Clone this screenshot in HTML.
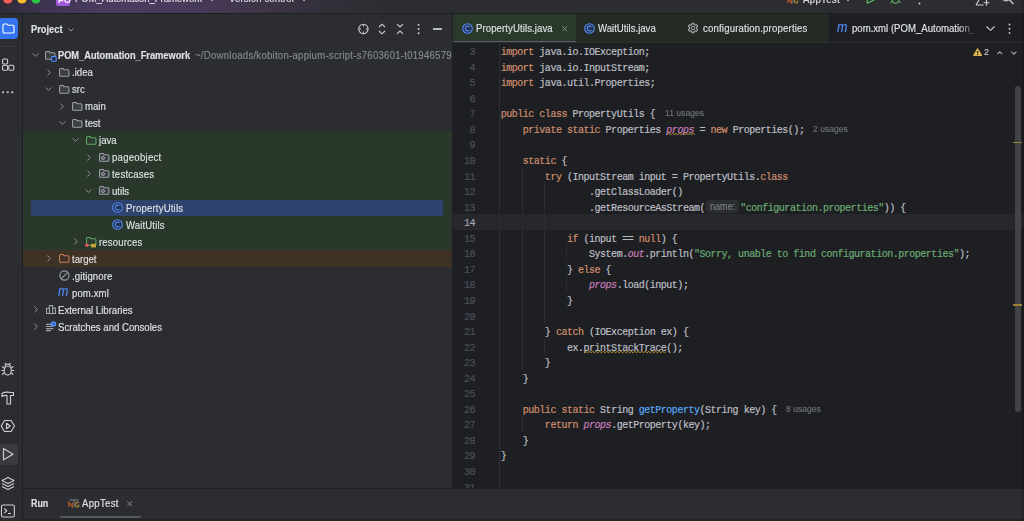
<!DOCTYPE html>
<html><head><meta charset="utf-8"><style>
*{margin:0;padding:0;box-sizing:border-box}
html,body{width:1024px;height:521px;overflow:hidden;background:#2B2D30;font-family:"Liberation Sans",sans-serif;color:#DFE1E5}
.a{position:absolute}
svg{position:absolute;overflow:visible}
.tx{position:absolute;white-space:nowrap;font-size:9.6px;line-height:12px;-webkit-text-stroke:0.15px currentColor}
.cl{position:absolute;left:47.7px;height:15.55px;padding-top:2px;font-family:"Liberation Mono",monospace;font-size:10px;letter-spacing:-0.48px;line-height:15.55px;white-space:pre;color:#BCBEC4;-webkit-text-stroke:0.2px currentColor}
.k{color:#CF8E6D}
.s{color:#6AAB73}
.f{color:#C77DBB;font-style:italic}
.m{color:#56A8F5}
.h{font-family:"Liberation Sans",sans-serif;color:#6F737A;font-size:9.3px;letter-spacing:0}
.ln{position:absolute;left:0;width:22px;height:15.55px;padding-top:2px;text-align:right;font-family:"Liberation Mono",monospace;font-size:10px;letter-spacing:-0.48px;line-height:15.55px;color:#4B5059;-webkit-text-stroke:0.2px currentColor}
</style></head><body>
<div class="a" style="left:0px;top:0px;width:1024px;height:13px;background:linear-gradient(90deg,#302B38 0%,#3D3350 4%,#4A3B5F 10%,#4A3B5E 17%,#3F3549 25%,#322F39 32%,#2B2D30 39%,#2B2D30 100%);"></div>
<div class="a" style="left:0px;top:13px;width:1024px;height:1px;background:#1E1F22;"></div>
<svg style="left:0px;top:-6px" width="60" height="12" viewBox="0 0 60 12"><circle cx="7.8" cy="5" r="4.6" fill="#FF5F57"/><circle cx="22" cy="5" r="4.6" fill="#FEBC2E"/><circle cx="36" cy="5" r="4.6" fill="#28C840"/></svg>
<div class="a" style="left:56px;top:-4px;width:14px;height:10px;background:#A259D9;border-radius:2px"></div>
<div class="tx" style="left:58px;top:-6.31px;color:#F0E8F8;font-size:9.90px;font-weight:bold;letter-spacing:0.000px;transform:scaleX(0.9091);transform-origin:0 0;">PO</div>
<div class="tx" style="left:75px;top:-7.73px;color:#DFE1E5;font-size:10.56px;font-weight:normal;letter-spacing:-0.088px;transform:scaleX(0.9091);transform-origin:0 0;">POM_Automation_Framework</div>
<svg style="left:209px;top:-2.5px" width="6" height="4" viewBox="0 0 6 4"><path d="M0.5 0.5 L3 3 L5.5 0.5" stroke="#9DA0A8" fill="none" stroke-width="1"/></svg>
<div class="tx" style="left:229px;top:-7.73px;color:#DFE1E5;font-size:10.56px;font-weight:normal;letter-spacing:0.110px;transform:scaleX(0.9091);transform-origin:0 0;">Version control</div>
<svg style="left:301px;top:-2.5px" width="6" height="4" viewBox="0 0 6 4"><path d="M0.5 0.5 L3 3 L5.5 0.5" stroke="#9DA0A8" fill="none" stroke-width="1"/></svg>
<svg style="left:787px;top:-5.5px" width="12" height="9" viewBox="0 0 12 9"><path d="M1.5 1 H10.5" stroke="#6F737A" stroke-width="1.3"/><path d="M6 1 V8.5" stroke="#6F737A" stroke-width="1.1"/><path d="M0.8 8 V3.2 L4.2 8 V3.2" stroke="#C0542A" fill="none" stroke-width="1.1"/><path d="M10.8 4 Q10.3 3.1 9.2 3.1 Q7.5 3.1 7.5 5.6 Q7.5 8.1 9.2 8.1 Q10.9 8.1 10.9 6.2 H9.3" stroke="#A88A3A" fill="none" stroke-width="1.1"/></svg>
<div class="tx" style="left:803px;top:-7.33px;color:#DFE1E5;font-size:10.56px;font-weight:normal;letter-spacing:0.363px;transform:scaleX(0.9091);transform-origin:0 0;">AppTest</div>
<svg style="left:845px;top:-2.5px" width="6" height="4" viewBox="0 0 6 4"><path d="M0.5 0.5 L3 3 L5.5 0.5" stroke="#9DA0A8" fill="none" stroke-width="1"/></svg>
<svg style="left:866px;top:-3px" width="10" height="8" viewBox="0 0 10 8"><path d="M1.2 -1 L9 2.5 L1.2 6.2 Z" stroke="#5FB865" fill="none" stroke-width="1.2" stroke-linejoin="round"/></svg>
<svg style="left:889px;top:-4px" width="13" height="9" viewBox="0 0 13 9"><path d="M3.2 1.5 Q3.2 -1 6.5 -1 Q9.8 -1 9.8 1.5 V4 Q9.8 7.2 6.5 7.2 Q3.2 7.2 3.2 4 Z" stroke="#5FB865" fill="none" stroke-width="1.1"/><path d="M0.8 3 H3.2 M9.8 3 H12.2 M1.2 6.8 L3.4 5.4 M11.8 6.8 L9.6 5.4 M3.2 1.8 H9.8" stroke="#5FB865" stroke-width="1" fill="none"/></svg>
<svg style="left:917.8px;top:1.5px" width="3" height="3" viewBox="0 0 3 3"><circle cx="1.5" cy="1.5" r="1" fill="#CED0D6"/></svg>
<svg style="left:974px;top:-3px" width="16" height="9" viewBox="0 0 16 9"><path d="M2 8 L5 3 M2 8 H9.5 M12.5 3 V8.8 M9.6 5.7 H15.4" stroke="#CED0D6" fill="none" stroke-width="1.15"/></svg>
<svg style="left:1000px;top:-5px" width="16" height="11" viewBox="0 0 16 11"><circle cx="6" cy="1.5" r="4.3" stroke="#CED0D6" fill="none" stroke-width="1.2"/><path d="M9.2 4.6 L13.5 9" stroke="#CED0D6" stroke-width="1.3"/></svg>
<div class="a" style="left:22px;top:14px;width:1px;height:507px;background:#1E1F22;"></div>
<div class="a" style="left:0px;top:17.5px;width:18px;height:21px;background:#3574F0;border-radius:0 4px 4px 0"></div>
<svg style="left:1.5px;top:23px" width="13" height="11" viewBox="0 0 13 11"><path d="M1 2 Q1 1 2 1 H5 L6.2 2.3 H11 Q12 2.3 12 3.3 V9 Q12 10 11 10 H2 Q1 10 1 9 Z" stroke="#FFFFFF" fill="none" stroke-width="1.1"/></svg>
<div class="a" style="left:0px;top:46px;width:16px;height:1px;background:#393B40;"></div>
<svg style="left:1px;top:57px" width="14" height="14" viewBox="0 0 14 14"><rect x="1.6" y="2" width="5" height="5" rx="1.2" stroke="#CED0D6" fill="none" stroke-width="1.1"/><rect x="1.6" y="8.2" width="5" height="5" rx="1.2" stroke="#CED0D6" fill="none" stroke-width="1.1"/><rect x="7.8" y="8.2" width="5" height="5" rx="1.2" stroke="#CED0D6" fill="none" stroke-width="1.1"/></svg>
<svg style="left:0px;top:90px" width="16" height="4" viewBox="0 0 16 4"><circle cx="3.1" cy="2.3" r="1.05" fill="#CED0D6"/><circle cx="7.7" cy="2.3" r="1.05" fill="#CED0D6"/><circle cx="12.3" cy="2.3" r="1.05" fill="#CED0D6"/></svg>
<svg style="left:0px;top:362px" width="16" height="15" viewBox="0 0 16 15"><path d="M5 4.5 Q5 2 7.7 2 Q10.4 2 10.4 4.5" stroke="#CED0D6" fill="none" stroke-width="1.1"/><ellipse cx="7.7" cy="8.5" rx="3.6" ry="4.5" stroke="#CED0D6" fill="none" stroke-width="1.1"/><path d="M1.5 8.5 H4 M11.4 8.5 H14 M2 4.5 L4.3 6 M13.4 4.5 L11.1 6 M2 12.5 L4.3 11 M13.4 12.5 L11.1 11 M5 1 L6 2.3 M10.4 1 L9.4 2.3" stroke="#CED0D6" stroke-width="1.1" fill="none"/></svg>
<svg style="left:0px;top:390px" width="16" height="16" viewBox="0 0 16 16"><path d="M2 3.5 Q5 1.5 11 2.5 H13.5 V5.5 H10.5 V14 H7 V5.5 Q5 5 2 6.5 Z" stroke="#CED0D6" fill="none" stroke-width="1.1" stroke-linejoin="round"/></svg>
<svg style="left:0px;top:418px" width="16" height="16" viewBox="0 0 16 16"><path d="M4.5 2.5 H11 L14.5 8 L11 13.5 H4.5 L1.2 8 Z" stroke="#CED0D6" fill="none" stroke-width="1.1" stroke-linejoin="round"/><path d="M6.5 5.3 L10.3 8 L6.5 10.7 Z" stroke="#CED0D6" fill="none" stroke-width="1.1" stroke-linejoin="round"/></svg>
<div class="a" style="left:0px;top:444px;width:18px;height:21px;background:#393B40;border-radius:0 4px 4px 0"></div>
<svg style="left:0px;top:446px" width="16" height="16" viewBox="0 0 16 16"><path d="M3.5 2.5 L13 8.2 L3.5 13.8 Z" stroke="#CED0D6" fill="none" stroke-width="1.1" stroke-linejoin="round"/></svg>
<svg style="left:0px;top:476px" width="16" height="15" viewBox="0 0 16 15"><path d="M8 1.5 L14 4.5 L8 7.5 L2 4.5 Z" stroke="#CED0D6" fill="none" stroke-width="1.1" stroke-linejoin="round"/><path d="M2 7.5 L8 10.5 L14 7.5 M2 10.5 L8 13.5 L14 10.5" stroke="#CED0D6" fill="none" stroke-width="1.1" stroke-linejoin="round"/></svg>
<svg style="left:0px;top:503px" width="16" height="16" viewBox="0 0 16 16"><rect x="1.5" y="2" width="12.8" height="12" rx="1.5" stroke="#CED0D6" fill="none" stroke-width="1.1"/><path d="M4.3 5.5 L6.8 7.8 L4.3 10 M8 10.5 H11" stroke="#CED0D6" fill="none" stroke-width="1.1"/></svg>
<div class="tx" style="left:31px;top:24.48px;color:#DFE1E5;font-size:10.23px;font-weight:bold;letter-spacing:0.000px;transform:scaleX(0.9091);transform-origin:0 0;">Project</div>
<svg style="left:67.5px;top:28px" width="7" height="4" viewBox="0 0 7 4"><path d="M0.5 0.5 L3 3 L5.5 0.5" stroke="#9DA0A8" fill="none" stroke-width="1"/></svg>
<svg style="left:357px;top:23px" width="13" height="13" viewBox="0 0 13 13"><circle cx="6.4" cy="6" r="4.7" stroke="#C4C6CB" fill="none" stroke-width="1.1"/><path d="M6.4 1.3 V3.6 M6.4 8.4 V10.7 M1.7 6 H4 M8.8 6 H11.1" stroke="#C4C6CB" stroke-width="1.1"/></svg>
<svg style="left:378px;top:23px" width="8" height="12" viewBox="0 0 8 12"><path d="M1 4 L4 1.2 L7 4 M1 8 L4 10.8 L7 8" stroke="#CED0D6" fill="none" stroke-width="1.1"/></svg>
<svg style="left:396px;top:23px" width="8" height="12" viewBox="0 0 8 12"><path d="M1 1.2 L4 4 L7 1.2 M1 10.8 L4 8 L7 10.8" stroke="#CED0D6" fill="none" stroke-width="1.1"/></svg>
<svg style="left:416px;top:23px" width="5" height="12" viewBox="0 0 5 12"><circle cx="2.6" cy="1.8" r="0.95" fill="#CED0D6"/><circle cx="2.6" cy="6" r="0.95" fill="#CED0D6"/><circle cx="2.6" cy="10.2" r="0.95" fill="#CED0D6"/></svg>
<div class="a" style="left:432.6px;top:28.4px;width:9.2px;height:1.2px;background:#B5B8BD;"></div>
<div class="a" style="left:23px;top:131.2px;width:429px;height:119px;background:#29382A;"></div>
<div class="a" style="left:23px;top:250.2px;width:429px;height:17px;background:#3E3224;"></div>
<div class="a" style="left:31px;top:199.7px;width:412px;height:16.5px;background:#2E436E;border-radius:3px"></div>
<svg style="left:32.0px;top:53.2px" width="7" height="4" viewBox="0 0 7 4"><path d="M0.5 0.5 L3.5 3.3 L6.5 0.5" stroke="#8C8F94" fill="none" stroke-width="1"/></svg>
<svg style="left:45.2px;top:50.7px" width="11" height="9" viewBox="0 0 11 9"><path d="M0.55 1.6 Q0.55 0.55 1.6 0.55 H4 L5.1 1.65 H8.9 Q9.95 1.65 9.95 2.7 V7.25 Q9.95 8.3 8.9 8.3 H1.6 Q0.55 8.3 0.55 7.25 Z" stroke="#9DA0A8" fill="#3C3E43" stroke-width="1.05"/></svg>
<svg style="left:51.2px;top:55.7px" width="6" height="6" viewBox="0 0 6 6"><rect x="0.6" y="0.6" width="4.6" height="4.6" rx="0.8" stroke="#548AF7" fill="#1E2A44" stroke-width="1.1"/></svg>
<div class="tx" style="left:58.0px;top:50.28px;color:#DFE1E5;font-size:10.18px;font-weight:bold;letter-spacing:0.000px;transform:scaleX(0.9091);transform-origin:0 0;">POM_Automation_Framework</div>
<div class="tx" style="left:194.5px;top:49.37px;color:#868A91;font-size:10.56px;font-weight:normal;letter-spacing:0.275px;transform:scaleX(0.9091);transform-origin:0 0;">~/Downloads/kobiton-appium-script-s7603601-t01946579</div>
<svg style="left:46.85px;top:68.67px" width="4" height="7" viewBox="0 0 4 7"><path d="M0.5 0.5 L3.3 3.5 L0.5 6.5" stroke="#8C8F94" fill="none" stroke-width="1"/></svg>
<svg style="left:58.7px;top:67.67px" width="11" height="9" viewBox="0 0 11 9"><path d="M0.55 1.6 Q0.55 0.55 1.6 0.55 H4 L5.1 1.65 H8.9 Q9.95 1.65 9.95 2.7 V7.25 Q9.95 8.3 8.9 8.3 H1.6 Q0.55 8.3 0.55 7.25 Z" stroke="#9DA0A8" fill="#3C3E43" stroke-width="1.05"/></svg>
<div class="tx" style="left:71.5px;top:66.34px;color:#DFE1E5;font-size:10.56px;font-weight:normal;letter-spacing:0.000px;transform:scaleX(0.9091);transform-origin:0 0;">.idea</div>
<svg style="left:45.35px;top:87.14px" width="7" height="4" viewBox="0 0 7 4"><path d="M0.5 0.5 L3.5 3.3 L6.5 0.5" stroke="#8C8F94" fill="none" stroke-width="1"/></svg>
<svg style="left:58.7px;top:84.64px" width="11" height="9" viewBox="0 0 11 9"><path d="M0.55 1.6 Q0.55 0.55 1.6 0.55 H4 L5.1 1.65 H8.9 Q9.95 1.65 9.95 2.7 V7.25 Q9.95 8.3 8.9 8.3 H1.6 Q0.55 8.3 0.55 7.25 Z" stroke="#9DA0A8" fill="#3C3E43" stroke-width="1.05"/></svg>
<div class="tx" style="left:71.5px;top:83.31px;color:#DFE1E5;font-size:10.56px;font-weight:normal;letter-spacing:0.000px;transform:scaleX(0.9091);transform-origin:0 0;">src</div>
<svg style="left:60.2px;top:102.61px" width="4" height="7" viewBox="0 0 4 7"><path d="M0.5 0.5 L3.3 3.5 L0.5 6.5" stroke="#8C8F94" fill="none" stroke-width="1"/></svg>
<svg style="left:72.2px;top:101.61px" width="11" height="9" viewBox="0 0 11 9"><path d="M0.55 1.6 Q0.55 0.55 1.6 0.55 H4 L5.1 1.65 H8.9 Q9.95 1.65 9.95 2.7 V7.25 Q9.95 8.3 8.9 8.3 H1.6 Q0.55 8.3 0.55 7.25 Z" stroke="#9DA0A8" fill="#3C3E43" stroke-width="1.05"/></svg>
<div class="tx" style="left:85.0px;top:100.28px;color:#DFE1E5;font-size:10.56px;font-weight:normal;letter-spacing:0.000px;transform:scaleX(0.9091);transform-origin:0 0;">main</div>
<svg style="left:58.7px;top:121.08px" width="7" height="4" viewBox="0 0 7 4"><path d="M0.5 0.5 L3.5 3.3 L6.5 0.5" stroke="#8C8F94" fill="none" stroke-width="1"/></svg>
<svg style="left:72.2px;top:118.58px" width="11" height="9" viewBox="0 0 11 9"><path d="M0.55 1.6 Q0.55 0.55 1.6 0.55 H4 L5.1 1.65 H8.9 Q9.95 1.65 9.95 2.7 V7.25 Q9.95 8.3 8.9 8.3 H1.6 Q0.55 8.3 0.55 7.25 Z" stroke="#9DA0A8" fill="#3C3E43" stroke-width="1.05"/></svg>
<div class="tx" style="left:85.0px;top:117.25px;color:#DFE1E5;font-size:10.56px;font-weight:normal;letter-spacing:0.000px;transform:scaleX(0.9091);transform-origin:0 0;">test</div>
<svg style="left:72.05px;top:138.05px" width="7" height="4" viewBox="0 0 7 4"><path d="M0.5 0.5 L3.5 3.3 L6.5 0.5" stroke="#8C8F94" fill="none" stroke-width="1"/></svg>
<svg style="left:85.7px;top:135.55px" width="11" height="9" viewBox="0 0 11 9"><path d="M0.55 1.6 Q0.55 0.55 1.6 0.55 H4 L5.1 1.65 H8.9 Q9.95 1.65 9.95 2.7 V7.25 Q9.95 8.3 8.9 8.3 H1.6 Q0.55 8.3 0.55 7.25 Z" stroke="#5FA86A" fill="#2E3B30" stroke-width="1.05"/></svg>
<div class="tx" style="left:98.5px;top:134.22px;color:#DFE1E5;font-size:10.56px;font-weight:normal;letter-spacing:0.000px;transform:scaleX(0.9091);transform-origin:0 0;">java</div>
<svg style="left:86.9px;top:153.51999999999998px" width="4" height="7" viewBox="0 0 4 7"><path d="M0.5 0.5 L3.3 3.5 L0.5 6.5" stroke="#8C8F94" fill="none" stroke-width="1"/></svg>
<svg style="left:99.2px;top:152.51999999999998px" width="11" height="9" viewBox="0 0 11 9"><path d="M0.55 1.6 Q0.55 0.55 1.6 0.55 H4 L5.1 1.65 H8.9 Q9.95 1.65 9.95 2.7 V7.25 Q9.95 8.3 8.9 8.3 H1.6 Q0.55 8.3 0.55 7.25 Z" stroke="#9DA0A8" fill="#3C3E43" stroke-width="1.05"/></svg>
<svg style="left:100.5px;top:155.51999999999998px" width="4" height="4" viewBox="0 0 4 4"><circle cx="2" cy="2" r="1.45" stroke="#A8ABB2" fill="none" stroke-width="1"/></svg>
<div class="tx" style="left:112.0px;top:151.19px;color:#DFE1E5;font-size:10.56px;font-weight:normal;letter-spacing:0.275px;transform:scaleX(0.9091);transform-origin:0 0;">pageobject</div>
<svg style="left:86.9px;top:170.49px" width="4" height="7" viewBox="0 0 4 7"><path d="M0.5 0.5 L3.3 3.5 L0.5 6.5" stroke="#8C8F94" fill="none" stroke-width="1"/></svg>
<svg style="left:99.2px;top:169.49px" width="11" height="9" viewBox="0 0 11 9"><path d="M0.55 1.6 Q0.55 0.55 1.6 0.55 H4 L5.1 1.65 H8.9 Q9.95 1.65 9.95 2.7 V7.25 Q9.95 8.3 8.9 8.3 H1.6 Q0.55 8.3 0.55 7.25 Z" stroke="#9DA0A8" fill="#3C3E43" stroke-width="1.05"/></svg>
<svg style="left:100.5px;top:172.49px" width="4" height="4" viewBox="0 0 4 4"><circle cx="2" cy="2" r="1.45" stroke="#A8ABB2" fill="none" stroke-width="1"/></svg>
<div class="tx" style="left:112.0px;top:168.16px;color:#DFE1E5;font-size:10.56px;font-weight:normal;letter-spacing:0.220px;transform:scaleX(0.9091);transform-origin:0 0;">testcases</div>
<svg style="left:85.4px;top:188.95999999999998px" width="7" height="4" viewBox="0 0 7 4"><path d="M0.5 0.5 L3.5 3.3 L6.5 0.5" stroke="#8C8F94" fill="none" stroke-width="1"/></svg>
<svg style="left:99.2px;top:186.45999999999998px" width="11" height="9" viewBox="0 0 11 9"><path d="M0.55 1.6 Q0.55 0.55 1.6 0.55 H4 L5.1 1.65 H8.9 Q9.95 1.65 9.95 2.7 V7.25 Q9.95 8.3 8.9 8.3 H1.6 Q0.55 8.3 0.55 7.25 Z" stroke="#9DA0A8" fill="#3C3E43" stroke-width="1.05"/></svg>
<svg style="left:100.5px;top:189.45999999999998px" width="4" height="4" viewBox="0 0 4 4"><circle cx="2" cy="2" r="1.45" stroke="#A8ABB2" fill="none" stroke-width="1"/></svg>
<div class="tx" style="left:112.0px;top:185.13px;color:#DFE1E5;font-size:10.56px;font-weight:normal;letter-spacing:0.000px;transform:scaleX(0.9091);transform-origin:0 0;">utils</div>
<svg style="left:112.4px;top:202.43px" width="11" height="11" viewBox="0 0 11 11"><circle cx="5.5" cy="5.5" r="4.8" stroke="#548AF7" fill="#25324D" stroke-width="1.1"/><path d="M7.4 4.1 Q6.9 3.1 5.6 3.1 Q3.4 3.1 3.4 5.5 Q3.4 7.9 5.6 7.9 Q6.9 7.9 7.4 6.9" stroke="#548AF7" fill="none" stroke-width="1.1"/></svg>
<div class="tx" style="left:125.5px;top:202.10px;color:#DFE1E5;font-size:10.56px;font-weight:normal;letter-spacing:0.198px;transform:scaleX(0.9091);transform-origin:0 0;">PropertyUtils</div>
<svg style="left:112.4px;top:219.39999999999998px" width="11" height="11" viewBox="0 0 11 11"><circle cx="5.5" cy="5.5" r="4.8" stroke="#548AF7" fill="#25324D" stroke-width="1.1"/><path d="M7.4 4.1 Q6.9 3.1 5.6 3.1 Q3.4 3.1 3.4 5.5 Q3.4 7.9 5.6 7.9 Q6.9 7.9 7.4 6.9" stroke="#548AF7" fill="none" stroke-width="1.1"/></svg>
<div class="tx" style="left:125.5px;top:219.07px;color:#DFE1E5;font-size:10.56px;font-weight:normal;letter-spacing:0.132px;transform:scaleX(0.9091);transform-origin:0 0;">WaitUtils</div>
<svg style="left:73.55px;top:238.37px" width="4" height="7" viewBox="0 0 4 7"><path d="M0.5 0.5 L3.3 3.5 L0.5 6.5" stroke="#8C8F94" fill="none" stroke-width="1"/></svg>
<svg style="left:85.7px;top:237.37px" width="11" height="9" viewBox="0 0 11 9"><path d="M0.55 1.6 Q0.55 0.55 1.6 0.55 H4 L5.1 1.65 H8.9 Q9.95 1.65 9.95 2.7 V7.25 Q9.95 8.3 8.9 8.3 H1.6 Q0.55 8.3 0.55 7.25 Z" stroke="#5FA86A" fill="#2E3B30" stroke-width="1.05"/></svg>
<svg style="left:84.7px;top:242.87px" width="12" height="5" viewBox="0 0 12 5"><circle cx="2" cy="2.2" r="1.7" fill="#E55B5B"/><rect x="6" y="0.8" width="5" height="3.6" fill="#C9A43A"/></svg>
<div class="tx" style="left:98.5px;top:236.04px;color:#DFE1E5;font-size:10.56px;font-weight:normal;letter-spacing:0.165px;transform:scaleX(0.9091);transform-origin:0 0;">resources</div>
<svg style="left:46.85px;top:255.33999999999997px" width="4" height="7" viewBox="0 0 4 7"><path d="M0.5 0.5 L3.3 3.5 L0.5 6.5" stroke="#8C8F94" fill="none" stroke-width="1"/></svg>
<svg style="left:58.7px;top:254.33999999999997px" width="11" height="9" viewBox="0 0 11 9"><path d="M0.55 1.6 Q0.55 0.55 1.6 0.55 H4 L5.1 1.65 H8.9 Q9.95 1.65 9.95 2.7 V7.25 Q9.95 8.3 8.9 8.3 H1.6 Q0.55 8.3 0.55 7.25 Z" stroke="#C77D55" fill="#3E3026" stroke-width="1.05"/></svg>
<div class="tx" style="left:71.5px;top:253.01px;color:#DFE1E5;font-size:10.56px;font-weight:normal;letter-spacing:0.000px;transform:scaleX(0.9091);transform-origin:0 0;">target</div>
<svg style="left:58.7px;top:270.31px" width="11" height="11" viewBox="0 0 11 11"><circle cx="5.5" cy="5.5" r="4.6" stroke="#9DA0A8" fill="none" stroke-width="1.1"/><path d="M2.3 8.7 L8.7 2.3" stroke="#9DA0A8" stroke-width="1.1"/></svg>
<div class="tx" style="left:71.5px;top:269.98px;color:#DFE1E5;font-size:10.56px;font-weight:normal;letter-spacing:0.110px;transform:scaleX(0.9091);transform-origin:0 0;">.gitignore</div>
<div class="tx" style="left:58.2px;top:285.85px;color:#548AF7;font-size:13.75px;font-weight:normal;letter-spacing:0.000px;transform:scaleX(0.9091);transform-origin:0 0;font-style:italic;">m</div>
<div class="tx" style="left:71.5px;top:286.95px;color:#DFE1E5;font-size:10.56px;font-weight:normal;letter-spacing:0.110px;transform:scaleX(0.9091);transform-origin:0 0;">pom.xml</div>
<svg style="left:33.5px;top:306.25px" width="4" height="7" viewBox="0 0 4 7"><path d="M0.5 0.5 L3.3 3.5 L0.5 6.5" stroke="#8C8F94" fill="none" stroke-width="1"/></svg>
<svg style="left:46.0px;top:305.4px" width="10" height="9" viewBox="0 0 10 9"><path d="M0.55 8.5 V3.2 H3.4 V8.5 M3.4 8.5 V0.55 H6.6 V8.5 M6.6 8.5 V3.2 L9.3 2.8 L9.45 8.5 M0.2 8.45 H9.8" stroke="#A8ABB0" fill="none" stroke-width="1.05" stroke-linejoin="round"/></svg>
<div class="tx" style="left:58.0px;top:303.92px;color:#DFE1E5;font-size:10.56px;font-weight:normal;letter-spacing:0.000px;transform:scaleX(0.9091);transform-origin:0 0;">External Libraries</div>
<svg style="left:33.5px;top:323.21999999999997px" width="4" height="7" viewBox="0 0 4 7"><path d="M0.5 0.5 L3.3 3.5 L0.5 6.5" stroke="#8C8F94" fill="none" stroke-width="1"/></svg>
<svg style="left:45.2px;top:321.21999999999997px" width="12" height="11" viewBox="0 0 12 11"><path d="M1 3.3 H6 M1 5.5 H7.5 M1 7.6 H8.5 M1 9.7 H6" stroke="#9DA0A8" stroke-width="1.2"/><circle cx="8.4" cy="3" r="2.8" fill="#548AF7"/><path d="M8.4 1.6 V3.1 L9.4 4" stroke="#1E2A44" stroke-width="0.7" fill="none"/></svg>
<div class="tx" style="left:58.0px;top:320.89px;color:#DFE1E5;font-size:10.56px;font-weight:normal;letter-spacing:0.000px;transform:scaleX(0.9091);transform-origin:0 0;">Scratches and Consoles</div>
<div class="a" style="left:452px;top:14px;width:1px;height:474px;background:#1E1F22;"></div>
<div class="a" style="left:453px;top:14px;width:571px;height:474px;background:#1E1F22;"></div>
<div class="a" style="left:453px;top:14px;width:123px;height:29px;background:#2A3A2A;"></div>
<div class="a" style="left:576px;top:14px;width:253px;height:29px;background:#232B24;"></div>
<div class="a" style="left:453px;top:40.5px;width:123px;height:2px;background:#5A5D63;"></div>
<div class="a" style="left:453px;top:42px;width:571px;height:1px;background:#2B2D30;"></div>
<svg style="left:461.5px;top:23.0px" width="11" height="11" viewBox="0 0 11 11"><circle cx="5.5" cy="5.5" r="4.8" stroke="#548AF7" fill="#25324D" stroke-width="1.1"/><path d="M7.4 4.1 Q6.9 3.1 5.6 3.1 Q3.4 3.1 3.4 5.5 Q3.4 7.9 5.6 7.9 Q6.9 7.9 7.4 6.9" stroke="#548AF7" fill="none" stroke-width="1.1"/></svg>
<div class="tx" style="left:476px;top:22.17px;color:#DFE1E5;font-size:10.56px;font-weight:normal;letter-spacing:0.099px;transform:scaleX(0.9091);transform-origin:0 0;">PropertyUtils.java</div>
<svg style="left:561.9px;top:25.7px" width="6" height="6" viewBox="0 0 6 6"><path d="M0.3 0.3 L5.1 5.1 M5.1 0.3 L0.3 5.1" stroke="#8A8D92" stroke-width="1"/></svg>
<svg style="left:583.5px;top:23.0px" width="11" height="11" viewBox="0 0 11 11"><circle cx="5.5" cy="5.5" r="4.8" stroke="#548AF7" fill="#25324D" stroke-width="1.1"/><path d="M7.4 4.1 Q6.9 3.1 5.6 3.1 Q3.4 3.1 3.4 5.5 Q3.4 7.9 5.6 7.9 Q6.9 7.9 7.4 6.9" stroke="#548AF7" fill="none" stroke-width="1.1"/></svg>
<div class="tx" style="left:598px;top:22.17px;color:#DFE1E5;font-size:10.56px;font-weight:normal;letter-spacing:0.000px;transform:scaleX(0.9091);transform-origin:0 0;">WaitUtils.java</div>
<svg style="left:687px;top:22.1px" width="12" height="12" viewBox="0 0 12 12"><path d="M4.98 1.21 L7.02 1.21 L7.08 2.46 L8.52 3.29 L9.64 2.72 L10.66 4.49 L9.61 5.17 L9.61 6.83 L10.66 7.51 L9.64 9.28 L8.52 8.71 L7.08 9.54 L7.02 10.79 L4.98 10.79 L4.92 9.54 L3.48 8.71 L2.36 9.28 L1.34 7.51 L2.39 6.83 L2.39 5.17 L1.34 4.49 L2.36 2.72 L3.48 3.29 L4.92 2.46 Z" stroke="#A8ABB0" fill="none" stroke-width="1.05" stroke-linejoin="round"/><circle cx="6" cy="6" r="1.75" stroke="#A8ABB0" fill="none" stroke-width="1"/></svg>
<div class="tx" style="left:702.5px;top:22.17px;color:#DFE1E5;font-size:10.56px;font-weight:normal;letter-spacing:0.198px;transform:scaleX(0.9091);transform-origin:0 0;">configuration.properties</div>
<div class="tx" style="left:837px;top:21.57px;color:#548AF7;font-size:13.75px;font-weight:normal;letter-spacing:0.000px;transform:scaleX(0.9091);transform-origin:0 0;font-style:italic;">m</div>
<div class="a" style="left:852px;top:14px;width:124px;height:28px;overflow:hidden;-webkit-mask-image:linear-gradient(90deg,#000 86%,transparent 100%)"><div class="tx" style="left:0px;top:8.17px;color:#DFE1E5;font-size:10.56px;font-weight:normal;letter-spacing:0.000px;transform:scaleX(0.9091);transform-origin:0 0;">pom.xml (POM_Automation_Framework)</div></div>
<svg style="left:986px;top:25.5px" width="9" height="5" viewBox="0 0 9 5"><path d="M0.5 0.5 L4.5 4.3 L8.5 0.5" stroke="#CED0D6" fill="none" stroke-width="1.1"/></svg>
<svg style="left:1007px;top:23px" width="5" height="12" viewBox="0 0 5 12"><circle cx="2.5" cy="1.5" r="0.95" fill="#CED0D6"/><circle cx="2.5" cy="5.7" r="0.95" fill="#CED0D6"/><circle cx="2.5" cy="9.9" r="0.95" fill="#CED0D6"/></svg>
<svg style="left:972.8px;top:47.8px" width="9.2" height="8.4" viewBox="0 0 9.2 8.4"><path d="M4.6 1.2 L8.3 7.3 H0.9 Z" fill="#D8B04A" stroke="#D8B04A" stroke-width="1.6" stroke-linejoin="round"/><path d="M4.6 2.9 V5.2" stroke="#1E1F22" stroke-width="1.1"/><circle cx="4.6" cy="6.6" r="0.6" fill="#1E1F22"/></svg>
<div class="tx" style="left:983.7px;top:45.80px;color:#C9CCD1;font-size:9.68px;font-weight:normal;letter-spacing:0.000px;transform:scaleX(0.9091);transform-origin:0 0;">2</div>
<svg style="left:996.6px;top:50.8px" width="6" height="4" viewBox="0 0 6 4"><path d="M0.4 3.2 L2.8 0.8 L5.2 3.2" stroke="#A8ABB0" fill="none" stroke-width="1.1"/></svg>
<svg style="left:1011.4px;top:50.6px" width="7" height="4" viewBox="0 0 7 4"><path d="M0.4 0.6 L2.9 3.1 L5.4 0.6" stroke="#A8ABB0" fill="none" stroke-width="1.1"/></svg>
<div class="a" style="left:453px;top:14px;width:571px;height:474px;overflow:hidden"><div class="a" style="left:0;top:200.20px;width:571px;height:15.55px;background:#26282E"></div><div class="a" style="left:46px;top:29.15px;width:1px;height:450.95px;background:#2B2D30"></div><div class="a" style="left:69px;top:153.55px;width:1px;height:202.15px;background:#2B2D30"></div><div class="a" style="left:91px;top:169.10px;width:1px;height:139.95px;background:#2B2D30"></div><div class="a" style="left:91px;top:324.60px;width:1px;height:15.55px;background:#2B2D30"></div><div class="a" style="left:113px;top:231.30px;width:1px;height:15.55px;background:#2B2D30"></div><div class="a" style="left:113px;top:262.40px;width:1px;height:15.55px;background:#2B2D30"></div><div class="a" style="left:69px;top:402.35px;width:1px;height:15.55px;background:#2B2D30"></div><div class="ln" style="top:29.15px;left:0;width:22px;color:#4B5059">3</div><div class="cl" style="top:29.15px"><span class="k">import</span> java.io.IOException;</div><div class="ln" style="top:44.70px;left:0;width:22px;color:#4B5059">4</div><div class="cl" style="top:44.70px"><span class="k">import</span> java.io.InputStream;</div><div class="ln" style="top:60.25px;left:0;width:22px;color:#4B5059">5</div><div class="cl" style="top:60.25px"><span class="k">import</span> java.util.Properties;</div><div class="ln" style="top:75.80px;left:0;width:22px;color:#4B5059">6</div><div class="ln" style="top:91.35px;left:0;width:22px;color:#4B5059">7</div><div class="cl" style="top:91.35px"><span class="k">public class</span> PropertyUtils {</div><div class="ln" style="top:106.90px;left:0;width:22px;color:#4B5059">8</div><div class="cl" style="top:106.90px">    <span class="k">private static</span> Properties <span class="f">props</span> = <span class="k">new</span> Properties();</div><div class="ln" style="top:122.45px;left:0;width:22px;color:#4B5059">9</div><div class="ln" style="top:138.00px;left:0;width:22px;color:#4B5059">10</div><div class="cl" style="top:138.00px">    <span class="k">static</span> {</div><div class="ln" style="top:153.55px;left:0;width:22px;color:#4B5059">11</div><div class="cl" style="top:153.55px">        <span class="k">try</span> (InputStream input = PropertyUtils.<span class="k">class</span></div><div class="ln" style="top:169.10px;left:0;width:22px;color:#4B5059">12</div><div class="cl" style="top:169.10px">                .getClassLoader()</div><div class="ln" style="top:184.65px;left:0;width:22px;color:#4B5059">13</div><div class="cl" style="top:184.65px">                .getResourceAsStream(</div><div class="ln" style="top:200.20px;left:0;width:22px;color:#A1A3AB">14</div><div class="ln" style="top:215.75px;left:0;width:22px;color:#4B5059">15</div><div class="cl" style="top:215.75px">            <span class="k">if</span> (input == <span class="k">null</span>) {</div><div class="ln" style="top:231.30px;left:0;width:22px;color:#4B5059">16</div><div class="cl" style="top:231.30px">                System.<span class="f">out</span>.println(<span class="s">&quot;Sorry, unable to find configuration.properties&quot;</span>);</div><div class="ln" style="top:246.85px;left:0;width:22px;color:#4B5059">17</div><div class="cl" style="top:246.85px">            } <span class="k">else</span> {</div><div class="ln" style="top:262.40px;left:0;width:22px;color:#4B5059">18</div><div class="cl" style="top:262.40px">                <span class="f">props</span>.load(input);</div><div class="ln" style="top:277.95px;left:0;width:22px;color:#4B5059">19</div><div class="cl" style="top:277.95px">            }</div><div class="ln" style="top:293.50px;left:0;width:22px;color:#4B5059">20</div><div class="ln" style="top:309.05px;left:0;width:22px;color:#4B5059">21</div><div class="cl" style="top:309.05px">        } <span class="k">catch</span> (IOException ex) {</div><div class="ln" style="top:324.60px;left:0;width:22px;color:#4B5059">22</div><div class="cl" style="top:324.60px">            ex.printStackTrace();</div><div class="ln" style="top:340.15px;left:0;width:22px;color:#4B5059">23</div><div class="cl" style="top:340.15px">        }</div><div class="ln" style="top:355.70px;left:0;width:22px;color:#4B5059">24</div><div class="cl" style="top:355.70px">    }</div><div class="ln" style="top:371.25px;left:0;width:22px;color:#4B5059">25</div><div class="ln" style="top:386.80px;left:0;width:22px;color:#4B5059">26</div><div class="cl" style="top:386.80px">    <span class="k">public static</span> String <span class="m">getProperty</span>(String key) {</div><div class="ln" style="top:402.35px;left:0;width:22px;color:#4B5059">27</div><div class="cl" style="top:402.35px">        <span class="k">return</span> <span class="f">props</span>.getProperty(key);</div><div class="ln" style="top:417.90px;left:0;width:22px;color:#4B5059">28</div><div class="cl" style="top:417.90px">    }</div><div class="ln" style="top:433.45px;left:0;width:22px;color:#4B5059">29</div><div class="cl" style="top:433.45px">}</div><div class="ln" style="top:449.00px;left:0;width:22px;color:#4B5059">30</div><div class="ln" style="top:464.55px;left:0;width:22px;color:#4B5059">31</div><div class="tx" style="left:211.5px;top:93.35px;color:#6F737A;font-size:9.46px;font-weight:normal;letter-spacing:0.000px;transform:scaleX(0.9091);transform-origin:0 0;">11 usages</div><div class="tx" style="left:360px;top:108.90px;color:#6F737A;font-size:9.46px;font-weight:normal;letter-spacing:0.000px;transform:scaleX(0.9091);transform-origin:0 0;">2 usages</div><div class="tx" style="left:332.5px;top:388.80px;color:#6F737A;font-size:9.46px;font-weight:normal;letter-spacing:0.000px;transform:scaleX(0.9091);transform-origin:0 0;">8 usages</div><div class="a" style="left:253.29999999999995px;top:186.05px;width:32.5px;height:13px;background:#2B2D30;border-radius:3.5px"></div><div class="tx" style="left:256.5px;top:187.13px;color:#7A7E85;font-size:10.01px;font-weight:normal;letter-spacing:0.000px;transform:scaleX(0.9091);transform-origin:0 0;">name:</div><div class="cl" style="left:287.2px;top:184.65px"><span class="s">"configuration.properties"</span>)) {</div><svg style="left:214px;top:119.40px" width="28" height="3"><path d="M0 1.7 L1.75 0.4 L3.50 1.7 L5.25 0.4 L7.00 1.7 L8.75 0.4 L10.50 1.7 L12.25 0.4 L14.00 1.7 L15.75 0.4 L17.50 1.7 L19.25 0.4 L21.00 1.7 L22.75 0.4 L24.50 1.7 L26.25 0.4 L28.00 1.7" stroke="#BE9C3A" fill="none" stroke-width="0.9"/></svg><svg style="left:131px;top:337.10px" width="83" height="3"><path d="M0 1.7 L1.75 0.4 L3.50 1.7 L5.25 0.4 L7.00 1.7 L8.75 0.4 L10.50 1.7 L12.25 0.4 L14.00 1.7 L15.75 0.4 L17.50 1.7 L19.25 0.4 L21.00 1.7 L22.75 0.4 L24.50 1.7 L26.25 0.4 L28.00 1.7 L29.75 0.4 L31.50 1.7 L33.25 0.4 L35.00 1.7 L36.75 0.4 L38.50 1.7 L40.25 0.4 L42.00 1.7 L43.75 0.4 L45.50 1.7 L47.25 0.4 L49.00 1.7 L50.75 0.4 L52.50 1.7 L54.25 0.4 L56.00 1.7 L57.75 0.4 L59.50 1.7 L61.25 0.4 L63.00 1.7 L64.75 0.4 L66.50 1.7 L68.25 0.4 L70.00 1.7 L71.75 0.4 L73.50 1.7 L75.25 0.4 L77.00 1.7 L78.75 0.4 L80.50 1.7 L82.25 0.4" stroke="#BE9C3A" fill="none" stroke-width="0.9"/></svg><div class="a" style="left:562px;top:71.8px;width:5.6px;height:326px;background:#414347;border-radius:2.8px"></div><div class="a" style="left:559.5px;top:128px;width:9px;height:1.3px;background:#9C7E35"></div><div class="a" style="left:559.5px;top:290.3px;width:9px;height:1.3px;background:#9C7E35"></div></div>
<div class="a" style="left:453px;top:42px;width:571px;height:1px;background:#2B2D30;"></div>
<div class="a" style="left:23px;top:488px;width:1001px;height:33px;background:#2B2D30;"></div>
<div class="a" style="left:23px;top:488px;width:1001px;height:1px;background:#1E1F22;"></div>
<div class="tx" style="left:31px;top:497.78px;color:#DFE1E5;font-size:10.41px;font-weight:bold;letter-spacing:0.000px;transform:scaleX(0.8547);transform-origin:0 0;">Run</div>
<svg style="left:68px;top:499px" width="12" height="9" viewBox="0 0 12 9"><path d="M1.5 1 H10.5" stroke="#6F737A" stroke-width="1.3"/><path d="M6 1 V8.5" stroke="#6F737A" stroke-width="1.1"/><path d="M0.8 8 V3.2 L4.2 8 V3.2" stroke="#C0542A" fill="none" stroke-width="1.1"/><path d="M10.8 4 Q10.3 3.1 9.2 3.1 Q7.5 3.1 7.5 5.6 Q7.5 8.1 9.2 8.1 Q10.9 8.1 10.9 6.2 H9.3" stroke="#A88A3A" fill="none" stroke-width="1.1"/></svg>
<div class="tx" style="left:82px;top:497.17px;color:#DFE1E5;font-size:10.56px;font-weight:normal;letter-spacing:0.319px;transform:scaleX(0.9091);transform-origin:0 0;">AppTest</div>
<svg style="left:127.2px;top:501px" width="6" height="6" viewBox="0 0 6 6"><path d="M0.3 0.3 L5.1 5.1 M5.1 0.3 L0.3 5.1" stroke="#8A8D92" stroke-width="1"/></svg>
<div class="a" style="left:60px;top:516.3px;width:81px;height:2.2px;background:#55585E;border-radius:1px"></div>
<div class="a" style="left:23px;top:518.6px;width:1001px;height:2.4px;background:#232427;"></div>
<div class="a" style="left:1022px;top:0px;width:2px;height:521px;background:rgba(0,0,0,0.16);"></div>
</body></html>
